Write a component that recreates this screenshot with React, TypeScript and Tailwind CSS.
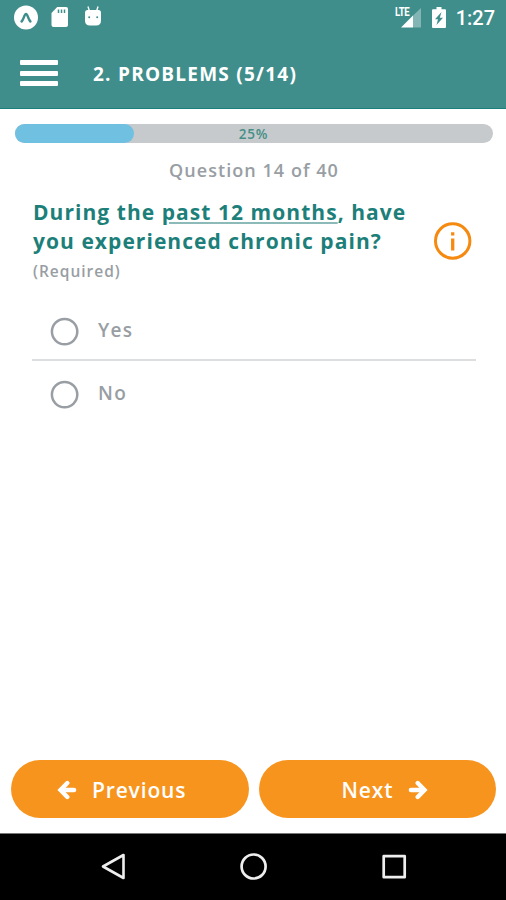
import type { ReactNode } from 'react';

const OPTIONS = ['Yes', 'No'];

function StatusBar() {
  return (
    <div className="flex h-9 items-start justify-between pl-[13px] pr-[11px] text-white">
      <div className="flex">
        <svg width="26" height="26" viewBox="0 0 26 26" className="mt-[4px]">
          <circle cx="13" cy="13.500" r="12" fill="white" />
          <path d="M8.600 17.500c2-1.800 2.800-7.500 4.400-7.500s2.400 5.700 4.400 7.500" fill="none" stroke="#3f8e8c" strokeWidth="2.500" strokeLinecap="round" />
        </svg>
        <svg width="18" height="22" viewBox="0 0 18 22" className="ml-[12px] mt-[6px]">
          <path d="M6.200 1H15q2 0 2 2v16q0 2-2 2H2.500q-2 0-2-2V7z" fill="white" />
          <path d="M7.500 3.500v3.500M10.500 3.500v3.500M13.500 3.500v3.500" stroke="#3f8e8c" strokeWidth="1.500" />
        </svg>
        <svg width="20" height="22" viewBox="0 0 20 22" className="ml-[14px] mt-[5px]">
          <path d="M5 1.500l1.500 5M15 1.500l-1.500 5" stroke="white" strokeWidth="1.400" />
          <path d="M4.500 5h11q2.500 0 2.500 3v7.500q0 5-5 5H7q-5 0-5-5V8q0-3 2.500-3z" fill="white" />
          <circle cx="6.200" cy="12.200" r="1" fill="#3f8e8c" />
          <circle cx="14.200" cy="12.200" r="1" fill="#3f8e8c" />
        </svg>
      </div>
      <div className="flex">
        <span className="ml-px mt-[6px] inline-block h-3 w-[15px] origin-left scale-x-[.8] font-['Roboto'] text-[12px] font-bold leading-3 tracking-[-.500px]">LTE</span>
        <svg width="21" height="20" viewBox="0 0 21 20" className="-ml-[10px] mt-[8px]">
          <path d="M21 0v19.500H13V7.500z" fill="white" opacity=".35" />
          <path d="M13 7.500v12H1z" fill="white" />
        </svg>
        <svg width="14" height="21" viewBox="0 0 14 21" className="ml-[11px] mt-[7px]">
          <path d="M4.500 0h5v2.300H13q1 0 1 1V20q0 1-1 1H1q-1 0-1-1V3.300q0-1 1-1h3.500z" fill="white" />
          <path d="M9.500 5L3 12.200h3L4.500 18l6.500-7.200H7.800z" fill="#3f8e8c" />
        </svg>
        <span className="ml-[10px] mt-[6px] font-['Roboto'] text-[20px] font-medium leading-6">1:27</span>
      </div>
    </div>
  );
}

function Header() {
  return (
    <div className="flex h-[73px] border-b border-[#187f7c] pl-5">
      <div className="mt-[24px] flex w-[38px] flex-col gap-[5.500px]">
        <span className="h-[5px] rounded-[1px] bg-white" />
        <span className="h-[5px] rounded-[1px] bg-white" />
        <span className="h-[5px] rounded-[1px] bg-white" />
      </div>
      <h1 className="ml-[35px] mt-[24px] whitespace-nowrap text-[19px] font-bold leading-7 tracking-[1.250px] text-white">2. PROBLEMS (5/14)</h1>
    </div>
  );
}

function Option({ label }: { label: string }) {
  return (
    <div className="flex items-center pl-[18px]">
      <svg width="29" height="29" viewBox="0 0 29 29" fill="none" stroke="#989ea3" strokeWidth="2.500">
        <circle cx="14.600" cy="14.600" r="12.700" />
      </svg>
      <span className="-mt-[3px] ml-[19px] text-[19px] font-semibold leading-7 tracking-[1.300px] text-[#989ea3]">{label}</span>
    </div>
  );
}

function PillButton({ children }: { children: ReactNode }) {
  return (
    <button className="flex h-[58.500px] flex-1 items-center rounded-full bg-[#f7941e] text-[21px] font-semibold tracking-[.850px] text-white">
      {children}
    </button>
  );
}

function Arrow({ className }: { className: string }) {
  return (
    <svg width="20" height="20" viewBox="0 0 20 20" className={className} fill="none" stroke="white" strokeLinecap="round">
      <path d="M4 10h13" strokeWidth="4.600" />
      <path d="M10.300 3L3.500 10l6.800 7" strokeWidth="4.400" strokeLinejoin="miter" />
    </svg>
  );
}

function NavBar() {
  return (
    <div className="flex h-[67px] border-t border-[#777] bg-black">
      <svg width="26" height="28" viewBox="0 0 26 28" className="ml-[100px] mt-[19px]" fill="none" stroke="#eee" strokeWidth="2.600" strokeLinejoin="round">
        <path d="M23.500 2v23L3 13.500z" />
      </svg>
      <svg width="28" height="28" viewBox="0 0 28 28" className="ml-[114px] mt-[19px]" fill="none" stroke="#eee" strokeWidth="2.700">
        <circle cx="13.600" cy="13.500" r="12" />
      </svg>
      <svg width="26" height="26" viewBox="0 0 26 26" className="ml-[113px] mt-[20px]" fill="none" stroke="#eee" strokeWidth="2.700" strokeLinejoin="round">
        <rect x="2.700" y="2.200" width="21" height="21" />
      </svg>
    </div>
  );
}

export default function App() {
  return (
    <div className="flex h-[900px] w-[506px] flex-col overflow-hidden bg-white font-['Open_Sans',sans-serif]">
      <div className="bg-[#3f8e8c]">
        <StatusBar />
        <Header />
      </div>

      <div className="ml-[14.500px] mr-[13.500px] mt-[14.500px] grid h-[19px] rounded-full bg-[#c6cacd]">
        <div className="col-start-1 row-start-1 h-[19px] w-1/4 rounded-full bg-[#6fc0e1]" />
        <span className="col-start-1 row-start-1 text-center text-[13.500px] font-semibold leading-5 tracking-[.800px] text-[#458f87]">25%</span>
      </div>
      <p className="mt-[13.500px] pl-[2px] text-center text-[18px] font-semibold leading-7 tracking-[1.050px] text-[#989ea3]">Question 14 of 40</p>

      <div className="ml-[33px] mt-[14px] flex">
        <div className="w-[401px]">
          <h2 className="whitespace-nowrap text-[21px] font-bold leading-[29px] tracking-[1.050px] text-[#1d7f7a]">
            During the <span className="underline decoration-[#8bbab8] decoration-[1.500px] underline-offset-[2px]">past 12 months</span>, have
            <br />
            you experienced chronic pain?
          </h2>
          <p className="mt-[3px] text-[15.500px] font-semibold leading-6 tracking-[1px] text-[#989ea3]">(Required)</p>
        </div>
        <svg width="38" height="38" viewBox="0 0 38 38" className="mt-[24px]" fill="none" stroke="#f68a10">
          <circle cx="18.700" cy="19" r="17.200" strokeWidth="3" />
          <path d="M18.700 10.200v3.200M18.700 16.500v12" strokeWidth="3.300" />
        </svg>
      </div>

      <div className="ml-[32px] mr-[30px] mt-[34px]">
        <Option label={OPTIONS[0]} />
        <div className="mb-[19px] mt-[13px] h-[2px] bg-[#dcdedf]" />
        <Option label={OPTIONS[1]} />
      </div>

      <div className="mb-[15px] mt-auto flex gap-[10px] pl-[11px] pr-[10px]">
        <PillButton>
          <Arrow className="ml-[46px] mr-[15px] mt-[2px]" />
          <span className="mt-[4px]">Previous</span>
        </PillButton>
        <PillButton>
          <span className="ml-[83px] mt-[4px]">Next</span>
          <Arrow className="ml-[15px] mt-[2px] rotate-180" />
        </PillButton>
      </div>
      <NavBar />
    </div>
  );
}
